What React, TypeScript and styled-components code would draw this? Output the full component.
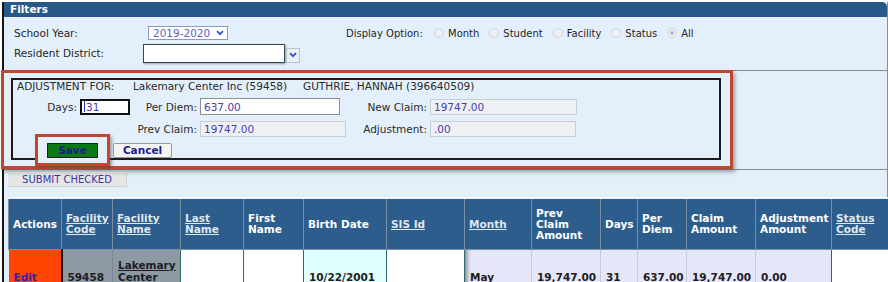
import React from 'react'
import styled, { createGlobalStyle, css } from 'styled-components'

const GlobalStyle = createGlobalStyle`
  body {
    margin: 0;
    background: #fff;
    font-family: "DejaVu Sans", Verdana, sans-serif;
    color: #222;
  }
`

const Page = styled.div`
  width: 888px;
  height: 282px;
  overflow: hidden;
  padding-top: 2px;
  box-sizing: border-box;
`

const Frame = styled.div`
  margin-left: 2px;
  border-left: 2px solid #151515;
  background: #e3f0fc;
`

const Panel = styled.div`
  width: 883px;
  border-right: 1px solid #8d8d8d;
`

const FiltersBar = styled.div`
  height: 15px;
  line-height: 15px;
  background: #285888;
  color: #fff;
  font-weight: bold;
  font-size: 10.5px;
  padding-left: 6px;
  border-radius: 0 5px 0 0;
`

const FilterBody = styled.div`
  display: flex;
  flex-direction: column;
  gap: 2px;
  padding: 8px 0 7px 10px;
`

const FilterRow = styled.div<{ $h: number }>`
  display: flex;
  align-items: center;
  height: ${(p) => p.$h}px;
`

const FilterLabel = styled.span<{ $w: number }>`
  width: ${(p) => p.$w}px;
  flex-shrink: 0;
  font-size: 10.5px;
  color: #262626;
`

const YearSelect = styled.div`
  width: 80px;
  height: 14px;
  box-sizing: border-box;
  border: 1px solid #8a9bb4;
  background: #fff;
  color: #6a5cc0;
  font-size: 10.5px;
  display: flex;
  align-items: center;
  justify-content: space-between;
  padding: 0 3px 0 4px;
`

const DisplayGroup = styled.div`
  margin-left: 118px;
  display: flex;
  align-items: center;
  font-size: 10px;
  color: #262626;
`

const DisplayLabel = styled.span`
  width: 88px;
`

const RadioItem = styled.label`
  display: flex;
  align-items: center;
  gap: 4px;
  margin-right: 10px;
`

const RadioDot = styled.span<{ $checked?: boolean }>`
  width: 10px;
  height: 10px;
  box-sizing: border-box;
  border-radius: 50%;
  border: 1px solid #cdd3da;
  background: #eef0f3;
  display: flex;
  align-items: center;
  justify-content: center;
  ${(p) =>
    p.$checked &&
    css`
      &::after {
        content: '';
        width: 4px;
        height: 4px;
        border-radius: 50%;
        background: #b3b9c1;
      }
    `}
`

const DistrictInput = styled.div`
  width: 142px;
  height: 19px;
  box-sizing: border-box;
  border: 1px solid #34494a;
  box-shadow: 1px 1px 2px rgba(0, 0, 0, 0.35);
  background: #fff;
`

const ArrowBox = styled.div`
  width: 14px;
  height: 15px;
  margin: 4px 0 0 1px;
  box-sizing: border-box;
  background: #e8eef6;
  border: 1px solid #b8c2cd;
  display: flex;
  align-items: center;
  justify-content: center;
`

const AdjustArea = styled.div`
  display: flex;
  border-top: 1px solid #8a8a8a;
  border-bottom: 1px solid #8a8a8a;
`

const Highlight = styled.div`
  width: 732px;
  margin: -1px 0 0 -3px;
  box-sizing: border-box;
  border: 3px solid #c4452d;
  box-shadow: 2px 3px 4px rgba(60, 60, 60, 0.45);
  padding: 5px 9px 6px 7px;
  position: relative;
  z-index: 1;
`

const InnerBox = styled.div`
  height: 82px;
  box-sizing: border-box;
  border: 2px solid #1b1b1b;
  font-size: 10.5px;
  color: #2a2a2a;
`

const InfoRow = styled.div`
  display: flex;
  height: 12px;
  line-height: 12px;
  padding-left: 4px;
`

const InfoText = styled.span<{ $w?: number }>`
  width: ${(p) => (p.$w ? `${p.$w}px` : 'auto')};
  flex-shrink: 0;
  white-space: nowrap;
`

const FieldRow = styled.div<{ $h: number }>`
  display: flex;
  align-items: center;
  height: ${(p) => p.$h}px;
  margin-top: 6px;
`

const FieldLabel = styled.span<{ $w: number }>`
  width: ${(p) => p.$w}px;
  flex-shrink: 0;
  text-align: right;
  margin-right: 3px;
  white-space: nowrap;
`

const TextBox = styled.div<{ $w: number; $h: number; $disabled?: boolean; $focused?: boolean }>`
  width: ${(p) => p.$w}px;
  height: ${(p) => p.$h}px;
  flex-shrink: 0;
  box-sizing: border-box;
  display: flex;
  align-items: center;
  padding-left: 3px;
  color: #4a3cb2;
  background: ${(p) => (p.$disabled ? '#eef1f4' : '#fff')};
  border: 1px solid ${(p) => (p.$disabled ? '#c9ced4' : '#8e8e8e')};
  ${(p) =>
    p.$focused &&
    css`
      border: 2px solid #111;
      padding-left: 2px;
    `}
`

const Caret = styled.span`
  width: 1px;
  height: 11px;
  background: #2a3ab0;
  margin-right: 1px;
`

const ButtonRow = styled.div`
  display: flex;
  align-items: center;
  height: 15px;
  margin-top: 6px;
  padding-left: 22px;
`

const SaveMark = styled.div`
  display: flex;
  margin: -9px 0 -8px 0;
  border: 3px solid #c4452d;
  padding: 6px 9px 5px 9px;
  box-shadow: 2px 2px 3px rgba(60, 60, 60, 0.45);
  background: #e3f0fc;
`

const Button = styled.button<{ $variant: 'save' | 'cancel' }>`
  height: 15px;
  padding: 0;
  font-family: inherit;
  font-weight: bold;
  font-size: 10.5px;
  line-height: 13px;
  color: #1c1c8a;
  ${(p) =>
    p.$variant === 'save'
      ? css`
          width: 51px;
          background: #0b7a14;
          border: 1px solid #1f1f1f;
        `
      : css`
          width: 59px;
          margin-left: 3px;
          background: #f4f4f4;
          border: 1px solid #9a9a9a;
          border-radius: 2px;
        `}
`

const SubmitBar = styled.div`
  display: flex;
  padding: 2px 0 10px 3px;
`

const SubmitButton = styled.button`
  width: 120px;
  height: 15px;
  padding: 0;
  font-family: inherit;
  font-size: 10px;
  line-height: 13px;
  color: #3a35a8;
  background: #e6e6e6;
  border: 1px solid #d0d0d0;
  border-top-color: #f7f7f7;
  border-left-color: #f7f7f7;
`

const TableSection = styled.div`
  padding: 1px 0 0 4px;
  border-top: 1px solid #f4f9ff;
`

const Grid = styled.table`
  width: 880px;
  table-layout: fixed;
  border-collapse: collapse;
  font-size: 10.5px;
`

const HeadCell = styled.th<{ $link?: boolean }>`
  height: 50px;
  padding: 0 3px 0 4px;
  background: #2d5d8c;
  border: 1px solid #7d8ea0;
  border-top: none;
  text-align: left;
  vertical-align: middle;
  line-height: 11px;
  font-weight: bold;
  color: ${(p) => (p.$link ? '#dfe7ef' : '#fff')};
  text-decoration: ${(p) => (p.$link ? 'underline' : 'none')};
`

type Tone = 'action' | 'gray' | 'white' | 'cyan' | 'lav' | 'month'

const toneStyles: Record<Tone, ReturnType<typeof css>> = {
  action: css`
    background: #ff4500;
    border-right: 2px solid #111;
  `,
  gray: css`
    background: #8d99a5;
    border-left: 1px solid #7c8896;
  `,
  white: css`
    background: #fff;
    border: 1px solid #2d6b6d;
  `,
  cyan: css`
    background: #e0ffff;
    border: 1px solid #2d6b6d;
  `,
  lav: css`
    background: #e6e6fa;
    border-left: 1px solid #c9c9dc;
  `,
  month: css`
    background: #e6e6fa;
    box-shadow: inset 5px 0 4px -3px rgba(0, 0, 0, 0.45);
  `,
}

const DataCell = styled.td<{ $tone: Tone }>`
  height: 53px;
  padding: 0 4px 0 5px;
  vertical-align: middle;
  line-height: 12px;
  font-weight: bold;
  color: #1d1d1d;
  text-decoration: underline;
  ${(p) => toneStyles[p.$tone]}
`

const EditLink = styled.a`
  color: #3522a6;
  text-decoration: underline;
  white-space: pre;
`

const Chevron = () => (
  <svg width="8" height="6" viewBox="0 0 8 6">
    <path d="M1 1.2 L4 4.2 L7 1.2" fill="none" stroke="#3550c8" strokeWidth="1.7" />
  </svg>
)

const columns: { label: string; width: number; link?: boolean }[] = [
  { label: 'Actions', width: 53 },
  { label: 'Facility Code', width: 51, link: true },
  { label: 'Facility Name', width: 68, link: true },
  { label: 'Last Name', width: 63, link: true },
  { label: 'First Name', width: 60 },
  { label: 'Birth Date', width: 83 },
  { label: 'SIS Id', width: 78, link: true },
  { label: 'Month', width: 67, link: true },
  { label: 'Prev Claim Amount', width: 69 },
  { label: 'Days', width: 37 },
  { label: 'Per Diem', width: 49 },
  { label: 'Claim Amount', width: 69 },
  { label: 'Adjustment Amount', width: 76 },
  { label: 'Status Code', width: 57, link: true },
]

const radios = ['Month', 'Student', 'Facility', 'Status', 'All']

const App = (): React.ReactElement => {
  return (
    <Page>
      <GlobalStyle />
      <Frame>
        <Panel>
          <FiltersBar>Filters</FiltersBar>
          <FilterBody>
            <FilterRow $h={16}>
              <FilterLabel $w={134}>School Year:</FilterLabel>
              <YearSelect>
                <span>2019-2020</span>
                <Chevron />
              </YearSelect>
              <DisplayGroup>
                <DisplayLabel>Display Option:</DisplayLabel>
                {radios.map((r) => (
                  <RadioItem key={r}>
                    <RadioDot $checked={r === 'All'} />
                    {r}
                  </RadioItem>
                ))}
              </DisplayGroup>
            </FilterRow>
            <FilterRow $h={20}>
              <FilterLabel $w={129}>Resident District:</FilterLabel>
              <DistrictInput />
              <ArrowBox>
                <Chevron />
              </ArrowBox>
            </FilterRow>
          </FilterBody>

          <AdjustArea>
            <Highlight>
              <InnerBox>
                <InfoRow>
                  <InfoText $w={116}>ADJUSTMENT FOR:</InfoText>
                  <InfoText $w={170}>Lakemary Center Inc (59458)</InfoText>
                  <InfoText>GUTHRIE, HANNAH (396640509)</InfoText>
                </InfoRow>
                <FieldRow $h={17}>
                  <FieldLabel $w={64}>Days:</FieldLabel>
                  <TextBox $w={50} $h={16} $focused>
                    <Caret />
                    31
                  </TextBox>
                  <FieldLabel $w={67}>Per Diem:</FieldLabel>
                  <TextBox $w={140} $h={17}>637.00</TextBox>
                  <FieldLabel $w={87}>New Claim:</FieldLabel>
                  <TextBox $w={147} $h={16} $disabled>19747.00</TextBox>
                </FieldRow>
                <FieldRow $h={16}>
                  <FieldLabel $w={184}>Prev Claim:</FieldLabel>
                  <TextBox $w={146} $h={16} $disabled>19747.00</TextBox>
                  <FieldLabel $w={81}>Adjustment:</FieldLabel>
                  <TextBox $w={146} $h={16} $disabled>.00</TextBox>
                </FieldRow>
                <ButtonRow>
                  <SaveMark>
                    <Button $variant="save">Save</Button>
                  </SaveMark>
                  <Button $variant="cancel">Cancel</Button>
                </ButtonRow>
              </InnerBox>
            </Highlight>
          </AdjustArea>

          <SubmitBar>
            <SubmitButton>SUBMIT CHECKED</SubmitButton>
          </SubmitBar>
        </Panel>

        <TableSection>
          <Grid>
            <colgroup>
              {columns.map((c) => (
                <col key={c.label} style={{ width: c.width }} />
              ))}
            </colgroup>
            <thead>
              <tr>
                {columns.map((c) => (
                  <HeadCell key={c.label} $link={c.link}>
                    {c.label}
                  </HeadCell>
                ))}
              </tr>
            </thead>
            <tbody>
              <tr>
                <DataCell $tone="action">
                  <EditLink>{'Edit     '}</EditLink>
                </DataCell>
                <DataCell $tone="gray">59458</DataCell>
                <DataCell $tone="gray">Lakemary Center Inc</DataCell>
                <DataCell $tone="white" />
                <DataCell $tone="white" />
                <DataCell $tone="cyan">10/22/2001</DataCell>
                <DataCell $tone="white" />
                <DataCell $tone="month">May</DataCell>
                <DataCell $tone="lav">19,747.00</DataCell>
                <DataCell $tone="lav">31</DataCell>
                <DataCell $tone="lav">637.00</DataCell>
                <DataCell $tone="lav">19,747.00</DataCell>
                <DataCell $tone="lav">0.00</DataCell>
                <DataCell $tone="white" />
              </tr>
            </tbody>
          </Grid>
        </TableSection>
      </Frame>
    </Page>
  )
}

export default App
